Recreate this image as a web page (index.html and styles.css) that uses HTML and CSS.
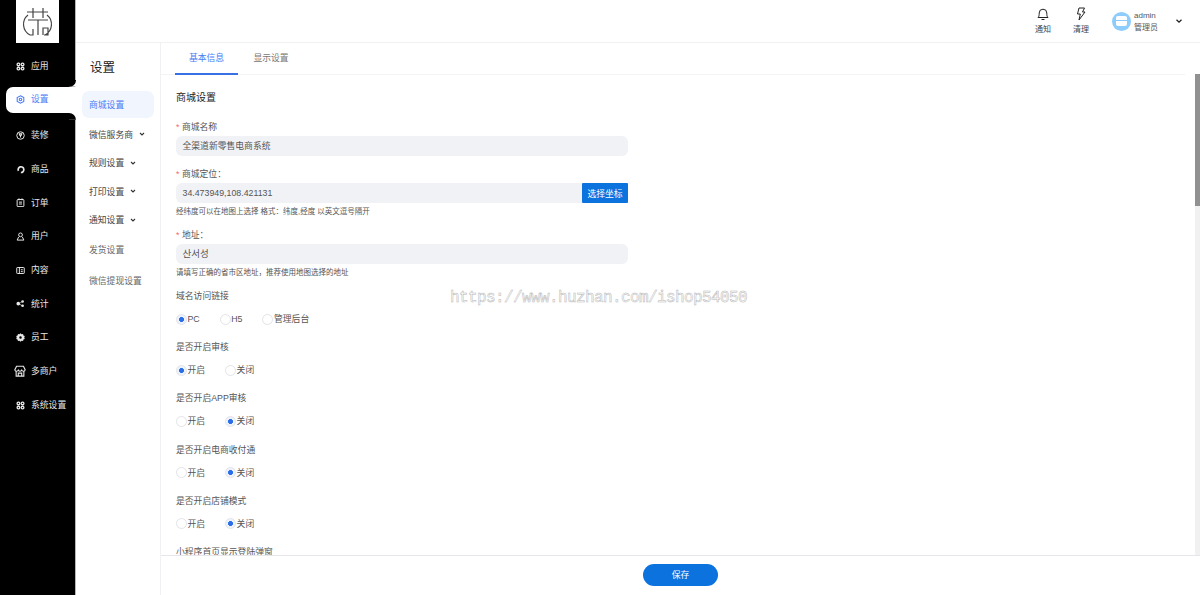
FILE: index.html
```html
<!DOCTYPE html>
<html lang="zh-CN">
<head>
  <meta charset="UTF-8">
  <title>设置</title>
  <link rel="stylesheet" href="styles.css">
</head>
<body>
  <div class="app">
    <aside class="sidebar">
      <div class="logo">
        <svg width="43" height="43" viewBox="0 0 43 43" fill="none" stroke="#444" stroke-width="1.200">
          <path d="M11 12h21M17 8v10M27 8v10M12 15A12 12 0 0 0 14 35M31 15A12 12 0 0 1 29 35M12 20h20M22 20v15M14 35h3v-6M27 35v-7h5v7h-4"/>
        </svg>
      </div>
      <nav class="nav">
        <a class="nav-item">
          <svg class="nav-icon" viewBox="0 0 12 12" fill="none" stroke="currentColor" stroke-width="1.700"><rect x="1.500" y="1.500" width="3.500" height="3.500" rx="1.500"/><rect x="7" y="1.500" width="3.500" height="3.500" rx="1.500"/><rect x="1.500" y="7" width="3.500" height="3.500" rx="1.500"/><rect x="7" y="7" width="3.500" height="3.500" rx="1.500"/></svg>
          应用</a>
        <a class="nav-item active">
          <svg class="nav-icon" viewBox="0 0 12 12" fill="none" stroke="currentColor" stroke-width="1.400"><path d="M6 1l4.400 2.500v5L6 11 1.600 8.500v-5z"/><circle cx="6" cy="6" r="1.700"/></svg>
          设置</a>
        <a class="nav-item">
          <svg class="nav-icon" viewBox="0 0 12 12" fill="none" stroke="currentColor" stroke-width="1.300"><circle cx="6" cy="6" r="5"/><path d="M4.300 3.800h3.400L6.800 6H5.200zM6 6v2.500" stroke-width="1.400"/></svg>
          装修</a>
        <a class="nav-item">
          <svg class="nav-icon" viewBox="0 0 12 12" fill="none" stroke="currentColor" stroke-width="2.200"><path d="M6.500 10A3.800 3.800 0 1 0 3.200 7.800"/></svg>
          商品</a>
        <a class="nav-item">
          <svg class="nav-icon" viewBox="0 0 12 12" fill="none" stroke="currentColor" stroke-width="1.300"><rect x="1.500" y="2" width="9" height="9.500" rx="1"/><path d="M4 .5v2.500M8 .5v2.500M4 5.500h4M4 8h4"/></svg>
          订单</a>
        <a class="nav-item">
          <svg class="nav-icon" viewBox="0 0 12 12" fill="none" stroke="currentColor" stroke-width="1.300"><circle cx="6" cy="3.800" r="2.500"/><path d="M3.600 6.500L1.500 10.800h9L8.400 6.500"/></svg>
          用户</a>
        <a class="nav-item">
          <svg class="nav-icon" viewBox="0 0 12 12" fill="none" stroke="currentColor" stroke-width="1.300"><rect x="1" y="2" width="10" height="8" rx=".8"/><path d="M4.500 2v8M6.500 5h2.500M6.500 7.500h2.500"/></svg>
          内容</a>
        <a class="nav-item">
          <svg class="nav-icon" viewBox="0 0 12 12" fill="currentColor"><circle cx="3" cy="6.200" r="2.400"/><circle cx="8.800" cy="3.300" r="1.800"/><circle cx="8.800" cy="9" r="1.800"/><path d="M3 6l5.500-2.800.3.600L3.500 6.700zM3.500 6l5.200 2.600-.4.700L3 6.600z"/></svg>
          统计</a>
        <a class="nav-item">
          <svg class="nav-icon" viewBox="0 0 12 12"><path fill="currentColor" fill-rule="evenodd" d="M6 .2l1.400 1.500 2-.4.500 2 1.800.8-.7 1.900.7 1.900-1.800.8-.5 2-2-.4L6 11.800l-1.400-1.500-2 .4-.5-2-1.800-.8.700-1.900-.7-1.900 1.800-.8.500-2 2 .4zM6 4.300a1.700 1.700 0 1 0 0 3.400 1.700 1.700 0 0 0 0-3.400z"/></svg>
          员工</a>
        <a class="nav-item">
          <svg class="nav-icon wide" viewBox="0 0 14 14" fill="none" stroke="currentColor" stroke-width="1.300"><path d="M3 1.500h8L13 5.500c0 1-1 1.800-2 1.800S9.200 6.500 9 6c-.3.500-1 1.300-2 1.300S5.300 6.500 5 6c-.2.500-1 1.300-2 1.300S1 6.500 1 5.500zM2.500 7.500v5.500h9V7.500M5 13V9.500h4V13"/></svg>
          多商户</a>
        <a class="nav-item">
          <svg class="nav-icon" viewBox="0 0 12 12" fill="none" stroke="currentColor" stroke-width="1.700"><rect x="1.500" y="1.500" width="3.500" height="3.500" rx="1.500"/><rect x="7" y="1.500" width="3.500" height="3.500" rx="1.500"/><rect x="1.500" y="7" width="3.500" height="3.500" rx="1.500"/><rect x="7" y="7" width="3.500" height="3.500" rx="1.500"/></svg>
          系统设置</a>
      </nav>
    </aside>

    <div class="right">
      <header class="topbar">
        <div class="tool">
          <svg width="14" height="14" viewBox="0 0 14 14" fill="none" stroke="#222" stroke-width="1"><path d="M2 10.500c1-1 1.200-2 1.200-4.500a3.800 3.800 0 0 1 7.600 0c0 2.500.2 3.500 1.200 4.500zM5.500 12.500h3"/></svg>
          <span>通知</span>
        </div>
        <div class="tool">
          <svg width="14" height="14" viewBox="0 0 14 14" fill="none" stroke="#222" stroke-width="1"><path d="M5 1h5.500L8.500 5H11L5 13l1.300-6H3.500z"/></svg>
          <span>清理</span>
        </div>
        <div class="user">
          <div class="avatar"><span class="avatar-bar"></span></div>
          <div class="user-text">
            <span>admin</span>
            <span>管理员</span>
          </div>
          <svg class="caret" width="8" height="8" viewBox="0 0 8 8" fill="none" stroke="#222" stroke-width="1.300"><path d="M1.500 2.800L4 5.200l2.500-2.400"/></svg>
        </div>
      </header>

      <div class="body">
        <div class="submenu">
          <h2>设置</h2>
          <a class="sub-item active">商城设置</a>
          <a class="sub-item dark">微信服务商<svg width="8" height="8" viewBox="0 0 8 8" fill="none" stroke="#333" stroke-width="1.100"><path d="M2 3l2 2 2-2"/></svg></a>
          <a class="sub-item dark">规则设置<svg width="8" height="8" viewBox="0 0 8 8" fill="none" stroke="#333" stroke-width="1.100"><path d="M2 3l2 2 2-2"/></svg></a>
          <a class="sub-item dark">打印设置<svg width="8" height="8" viewBox="0 0 8 8" fill="none" stroke="#333" stroke-width="1.100"><path d="M2 3l2 2 2-2"/></svg></a>
          <a class="sub-item dark">通知设置<svg width="8" height="8" viewBox="0 0 8 8" fill="none" stroke="#333" stroke-width="1.100"><path d="M2 3l2 2 2-2"/></svg></a>
          <a class="sub-item">发货设置</a>
          <a class="sub-item">微信提现设置</a>
        </div>

        <main class="main">
          <div class="tabs">
            <a class="tab active">基本信息</a>
            <a class="tab">显示设置</a>
          </div>

          <div class="scroll">
            <form class="form">
              <h3>商城设置</h3>

              <div class="item">
                <label class="req">商城名称</label>
                <div class="field">全渠道新零售电商系统</div>
              </div>

              <div class="item tight">
                <label class="req">商城定位：</label>
                <div class="field-row">
                  <div class="field">34.473949,108.421131</div>
                  <button type="button" class="pick">选择坐标</button>
                </div>
                <p class="hint">经纬度可以在地图上选择 格式：纬度,经度 以英文逗号隔开</p>
              </div>

              <div class="item">
                <label class="req">地址：</label>
                <div class="field kr" lang="ko">산서성</div>
                <p class="hint">请填写正确的省市区地址，推荐使用地图选择的地址</p>
              </div>

              <div class="item radio-item">
                <label>域名访问链接</label>
                <div class="radios">
                  <span class="radio on">PC</span>
                  <span class="radio">H5</span>
                  <span class="radio">管理后台</span>
                </div>
              </div>

              <div class="item radio-item">
                <label>是否开启审核</label>
                <div class="radios">
                  <span class="radio on">开启</span>
                  <span class="radio">关闭</span>
                </div>
              </div>

              <div class="item radio-item">
                <label>是否开启APP审核</label>
                <div class="radios">
                  <span class="radio">开启</span>
                  <span class="radio on">关闭</span>
                </div>
              </div>

              <div class="item radio-item">
                <label>是否开启电商收付通</label>
                <div class="radios">
                  <span class="radio">开启</span>
                  <span class="radio on">关闭</span>
                </div>
              </div>

              <div class="item radio-item">
                <label>是否开启店铺模式</label>
                <div class="radios">
                  <span class="radio">开启</span>
                  <span class="radio on">关闭</span>
                </div>
              </div>

              <div class="item radio-item">
                <label>小程序首页显示登陆弹窗</label>
              </div>
            </form>
            <div class="track"><div class="thumb"></div></div>
          </div>

          <footer class="footer">
            <button type="button" class="save">保存</button>
          </footer>
        </main>
      </div>
    </div>
  </div>

  <div class="watermark">https://www.huzhan.com/ishop54050</div>
</body>
</html>
```

FILE: styles.css
```css
* {
  box-sizing: border-box;
}
body {
  margin: 0;
  height: 100vh;
  overflow: hidden;
  background: #fff;
  color: #444;
  font-family: 'Liberation Sans', 'Noto Sans CJK SC', sans-serif;
  font-size: 8.800px;
}
.app {
  display: flex;
  height: 100%;
}

/* left black bar */
.sidebar {
  width: 76px;
  flex-shrink: 0;
  background: #000;
  border-right: 1px solid #b8b8b8;
}
.logo {
  width: 43px;
  height: 43px;
  margin-left: 16px;
  background: #fff;
}
.logo svg {
  display: block;
}
.nav {
  display: flex;
  flex-direction: column;
  margin-top: 7px;
}
.nav-item {
  position: relative;
  display: flex;
  align-items: center;
  gap: 6.500px;
  height: 33.700px;
  margin-left: 6px;
  padding-left: 9.500px;
  color: #e8e8e8;
  line-height: 1;
}
.nav-icon {
  width: 9px;
  height: 9px;
  flex-shrink: 0;
}
.nav-icon.wide {
  width: 12px;
  height: 12px;
  margin: 0 -1.500px;
}
.nav-item.active {
  height: 26px;
  margin: 3px -1px 6px 6px;
  border-radius: 7px 0 0 7px;
  background: #fff;
  color: #4a7cf6;
}
.nav-item.active::before,
.nav-item.active::after {
  content: "";
  position: absolute;
  right: 0;
  width: 7px;
  height: 7px;
  background: #000;
}
.nav-item.active::before {
  top: -7px;
  border-radius: 0 0 7px 0;
  box-shadow: 2px 2px 0 2px #fff;
  clip-path: inset(0 0 0 0);
}
.nav-item.active::after {
  bottom: -7px;
  border-radius: 0 7px 0 0;
  box-shadow: 2px -2px 0 2px #fff;
  clip-path: inset(0 0 0 0);
}

.right {
  flex: 1;
  display: flex;
  flex-direction: column;
  min-width: 0;
}

/* top header */
.topbar {
  height: 43px;
  flex-shrink: 0;
  display: flex;
  justify-content: flex-end;
  align-items: center;
  padding-right: 17px;
  border-bottom: 1px solid #f1f1f3;
}
.tool {
  width: 38px;
  display: flex;
  flex-direction: column;
  align-items: center;
  gap: 3px;
  color: #444;
  font-size: 8px;
  line-height: 11px;
}
.user {
  display: flex;
  align-items: center;
  margin-left: 12px;
}
.avatar {
  width: 19px;
  height: 19px;
  border-radius: 50%;
  background: #8ecdfb;
  display: flex;
  align-items: center;
  justify-content: center;
}
.avatar-bar {
  width: 11px;
  height: 10px;
  border-radius: 2px;
  background: linear-gradient(#fff 0 4px, #8ecdfb 4px 5.500px, #fff 5.500px);
}
.user-text {
  display: flex;
  flex-direction: column;
  margin: 1px 0 0 3px;
  font-size: 8px;
  line-height: 12px;
  color: #555;
}
.caret {
  margin-left: 17px;
}

.body {
  flex: 1;
  display: flex;
  min-height: 0;
}

/* second level menu */
.submenu {
  width: 85px;
  flex-shrink: 0;
  padding: 0 6px;
  border-right: 1px solid #f1f1f3;
}
.submenu h2 {
  margin: 16px 0 14px 8px;
  font-size: 12.500px;
  font-weight: 400;
  line-height: 18px;
  color: #222;
}
.sub-item {
  display: flex;
  align-items: center;
  gap: 6px;
  height: 30px;
  margin-bottom: 1px;
  padding-left: 7px;
  color: #666;
  white-space: nowrap;
}
.sub-item svg {
  margin-left: -1px;
}
.sub-item.dark {
  height: 27px;
  margin-bottom: 1.500px;
  color: #444;
}
.sub-item.active {
  height: 27px;
  margin-bottom: 2.500px;
  border-radius: 7px;
  background: #f1f5fe;
  color: #4a7cf6;
}

.main {
  flex: 1;
  display: flex;
  flex-direction: column;
  min-width: 0;
}

.tabs {
  height: 32px;
  flex-shrink: 0;
  display: flex;
  gap: 14px;
  margin-right: 15px;
  padding-left: 14px;
  border-bottom: 1px solid #f4f4f6;
}
.tab {
  height: 32px;
  line-height: 31px;
  text-align: center;
  color: #777;
}
.tab.active {
  width: 63px;
  border-bottom: 2px solid #3a70e6;
  color: #4a7cf6;
}
.tab + .tab {
  width: 64px;
  margin-left: -13px;
}

.scroll {
  flex: 1;
  min-height: 0;
  margin-top: -1px;
  display: flex;
  justify-content: space-between;
  overflow: hidden;
}
.track {
  width: 5px;
  background: #f1f1f1;
}
.thumb {
  height: 132px;
  background: #919191;
}

.form {
  width: 467px;
  padding: 17px 0 0 15px;
}
.form h3 {
  margin: 0 0 15px;
  font-size: 10px;
  font-weight: 400;
  line-height: 14px;
  color: #222;
}
.item {
  margin-bottom: 11px;
}
.item.tight {
  margin-bottom: 10px;
}
.item label {
  display: block;
  margin-bottom: 3px;
  padding-top: 1px;
  line-height: 12px;
  color: #555;
}
.req::before {
  content: "*";
  margin-right: 2.500px;
  color: #f56c6c;
}
.field {
  flex: 1;
  height: 20px;
  padding-left: 6.500px;
  border-radius: 6px;
  background: #f1f2f5;
  line-height: 20px;
  color: #555;
}
.kr {
  font-family: 'Liberation Sans', 'Noto Sans CJK KR', sans-serif;
  font-size: 9.500px;
}
.field-row {
  display: flex;
}
.field-row .field {
  border-radius: 6px 0 0 6px;
}
.pick {
  width: 46px;
  height: 20px;
  padding: 0;
  border: 0;
  border-radius: 1px;
  background: #0b72de;
  color: #fff;
  font: inherit;
}
.hint {
  margin: 3px 0 0;
  font-size: 7.500px;
  line-height: 12px;
  color: #555;
}

.radio-item {
  margin-bottom: 16.200px;
}
.radio-item label {
  margin-bottom: 11px;
  padding-top: 0;
}
.radios {
  display: flex;
  gap: 20px;
  height: 12px;
}
.radio {
  display: flex;
  align-items: center;
  line-height: 12px;
  color: #555;
}
.radio::before {
  content: "";
  width: 9px;
  height: 9px;
  margin-right: 0.500px;
  border: 1px solid #e3e4e8;
  border-radius: 50%;
  background: #fff;
}
.radio.on::before {
  background: radial-gradient(circle, #2a6ee8 0 2.200px, #eef2fb 2.600px);
}

.footer {
  height: 40px;
  flex-shrink: 0;
  display: flex;
  justify-content: center;
  align-items: center;
  padding-bottom: 2px;
  border-top: 1px solid #e6e6ea;
}
.save {
  width: 75px;
  height: 22px;
  padding: 0;
  border: 0;
  border-radius: 11px;
  background: #0b72de;
  color: #fff;
  font: inherit;
}

/* stamped over the shot */
.watermark {
  position: absolute;
  left: 450px;
  top: 289px;
  font-family: 'Liberation Mono', monospace;
  font-size: 16px;
  letter-spacing: -0.600px;
  line-height: 18px;
  color: #fff;
  -webkit-text-stroke: 0.500px #b5b5b5;
  white-space: nowrap;
}
```
